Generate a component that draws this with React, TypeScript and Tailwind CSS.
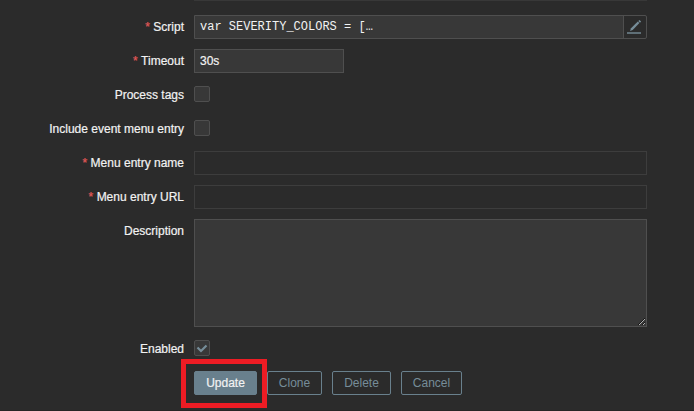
import type { ReactNode } from "react";

function Row({ label, required, children }: { label?: string; required?: boolean; children: ReactNode }) {
  return (
    <div className="flex items-start">
      <div className="mr-[10px] w-[184px] shrink-0 whitespace-nowrap text-right leading-6 [-webkit-text-stroke:0.2px]">
        {required && <span className="mr-[3.5px] text-[#e45959]">*</span>}
        {label}
      </div>
      {children}
    </div>
  );
}

function Check({ checked }: { checked?: boolean }) {
  return (
    <div className="flex h-6 items-start pt-[3px]">
      <span className="block h-4 w-4 rounded-[2px] border border-[#4f4f4f] bg-[#383838]">
        {checked && (
          <svg width="14" height="14" viewBox="0 0 14 14" fill="none" stroke="#768d99" strokeWidth="2.2">
            <path d="M2.5 6.5L6 10l5.5-5.5" />
          </svg>
        )}
      </span>
    </div>
  );
}

const outline = "h-6 shrink-0 rounded-[2px] border border-[#69808d] text-center leading-[22px] text-[#768d99]";

export default function App() {
  return (
    <div className="h-[411px] w-[694px] overflow-hidden border-b border-[#262626] bg-[#2b2b2b] font-['Liberation_Sans',Arial,sans-serif] text-[12px] text-[#f2f2f2]">
      <div className="ml-[194px] h-px w-[453px] bg-[#383838]" />
      <div className="flex flex-col gap-[10px] pt-[14px]">
        <Row label="Script" required>
          <div className="flex h-6 w-[453px] rounded-r-[2px] border border-[#4f4f4f]">
            <div className="flex-1 border-r border-[#4f4f4f] bg-[#383838] pl-[5px] font-['Liberation_Mono','Courier_New',monospace] leading-[23px]">
              var SEVERITY_COLORS = […
            </div>
            <button className="h-[22px] w-[22px]" aria-label="Edit">
              <svg width="22" height="22" viewBox="0 0 22 22" fill="none">
                <path d="M3 17h14" stroke="#768d99" strokeWidth="1.4" />
                <path d="M6 15l1-2.8 6.8-6.7 1.6 1.6L8.7 14z" fill="#768d99" />
                <path d="M14.3 5l1.2-1.1 1.6 1.6L16 6.7z" fill="#768d99" />
              </svg>
            </button>
          </div>
        </Row>
        <Row label="Timeout" required>
          <input className="h-6 w-[150px] border border-[#4f4f4f] bg-[#383838] px-[5px] outline-none [-webkit-text-stroke:0.2px]" defaultValue="30s" />
        </Row>
        <Row label="Process tags"><Check /></Row>
        <Row label="Include event menu entry"><Check /></Row>
        <Row label="Menu entry name" required>
          <input className="h-6 w-[453px] border border-[#3d3d3d] px-[5px]" disabled />
        </Row>
        <Row label="Menu entry URL" required>
          <input className="h-6 w-[453px] border border-[#3d3d3d] px-[5px]" disabled />
        </Row>
        <Row label="Description">
          <textarea className="block h-[108px] w-[453px] resize border border-[#4f4f4f] bg-[#383838] px-[5px] outline-none" />
        </Row>
        <Row label="Enabled"><Check checked /></Row>
        <Row>
          <div className="flex gap-[10px]">
            <div className="relative">
              <button className="block h-6 w-[63px] rounded-[2px] border border-[#69808d] bg-[#69808d] leading-[22px] [-webkit-text-stroke:0.2px]">Update</button>
              <div className="pointer-events-none absolute -left-[13px] -top-[12px] h-[49px] w-[86px] border-[5px] border-[#ed1c24]" />
            </div>
            <button className={`${outline} w-[55px]`}>Clone</button>
            <button className={`${outline} w-[59px]`}>Delete</button>
            <button className={`${outline} w-[61px]`}>Cancel</button>
          </div>
        </Row>
      </div>
    </div>
  );
}
